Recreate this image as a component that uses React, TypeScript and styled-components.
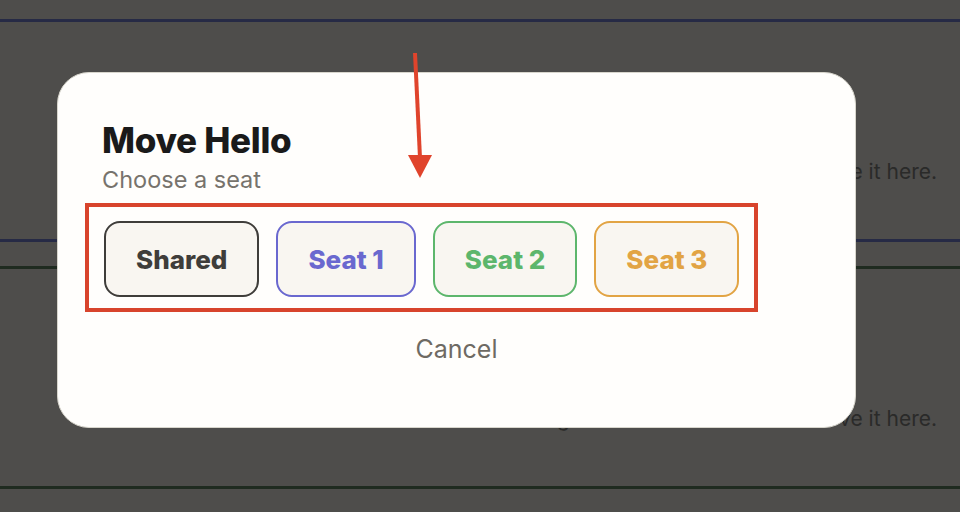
import React from "react";
import styled, { createGlobalStyle } from "styled-components";

const GlobalStyle = createGlobalStyle`
  html, body {
    margin: 0;
    padding: 0;
  }
  body {
    background: #4e4d4b;
    font-family: Inter, "Noto Sans", sans-serif;
    overflow: hidden;
  }
`;

const Page = styled.div`
  position: relative;
  width: 960px;
  height: 512px;
  padding-top: 19px;
  box-sizing: border-box;
  overflow: hidden;
`;

const Section = styled.section<{ $line: string }>`
  border-top: 3px solid ${(p) => p.$line};
  border-bottom: 3px solid ${(p) => p.$line};
  height: 223px;
  padding: 136px 23px 0 0;
  box-sizing: border-box;
  display: flex;
  justify-content: flex-end;
  align-items: flex-start;
  & + & {
    margin-top: 24px;
  }
`;

const Hint = styled.p`
  margin: 0;
  font-size: 21px;
  line-height: 28px;
  color: #2a2a29;
`;

const Modal = styled.div`
  position: absolute;
  left: 57px;
  top: 72px;
  width: 799px;
  height: 356px;
  box-sizing: border-box;
  padding: 47px 27px 0;
  background: #fffefc;
  border: 1.5px solid #d8d6cd;
  border-radius: 32px;
  display: flex;
  flex-direction: column;
  align-items: flex-start;
`;

const Title = styled.h2`
  margin: 0 0 0 17px;
  font-size: 35px;
  line-height: 40px;
  font-weight: 800;
  color: #1a1a1a;
  letter-spacing: -0.3px;
`;

const Subtitle = styled.p`
  margin: 6px 0 0 17px;
  font-size: 23.5px;
  line-height: 28px;
  color: #77736c;
`;

const SeatRow = styled.div`
  margin-top: 9px;
  display: flex;
  gap: 17px;
  border: 4px solid #d8442c;
  padding: 14px 15px 11px;
`;

const SeatButton = styled.button<{ $color: string }>`
  height: 76px;
  padding: 0 30px;
  box-sizing: border-box;
  border: 2.5px solid ${(p) => p.$color};
  border-radius: 16px;
  background: #f9f6f1;
  color: ${(p) => p.$color};
  font-family: Inter, "Noto Sans", sans-serif;
  font-size: 26px;
  font-weight: 800;
  cursor: pointer;
`;

const Cancel = styled.button`
  align-self: center;
  margin-top: 22px;
  border: none;
  background: none;
  padding: 0;
  font-family: Inter, "Noto Sans", sans-serif;
  font-size: 25px;
  line-height: 30px;
  color: #6e6a63;
  cursor: pointer;
`;

const Arrow = styled.svg`
  position: absolute;
  left: 400px;
  top: 50px;
  width: 40px;
  height: 135px;
`;

const seats = [
  { label: "Shared", color: "#3f3d3a" },
  { label: "Seat 1", color: "#6a68cf" },
  { label: "Seat 2", color: "#5db66c" },
  { label: "Seat 3", color: "#e2a444" },
];

export default function App() {
  return (
    <Page>
      <GlobalStyle />
      <Section $line="#262a45">
        <Hint>Drag a card onto this seat to move it here.</Hint>
      </Section>
      <Section $line="#1f2b20">
        <Hint>Drag a card onto this seat to move it here.</Hint>
      </Section>

      <Modal>
        <Title>Move Hello</Title>
        <Subtitle>Choose a seat</Subtitle>
        <SeatRow>
          {seats.map((seat) => (
            <SeatButton key={seat.label} $color={seat.color}>
              {seat.label}
            </SeatButton>
          ))}
        </SeatRow>
        <Cancel>Cancel</Cancel>
      </Modal>

      {/* annotation arrow */}
      <Arrow viewBox="0 0 40 135">
        <line x1="15" y1="3" x2="20" y2="108" stroke="#e0442c" strokeWidth="4" />
        <polygon points="8,105 32,105 20,128" fill="#e0442c" />
      </Arrow>
    </Page>
  );
}
